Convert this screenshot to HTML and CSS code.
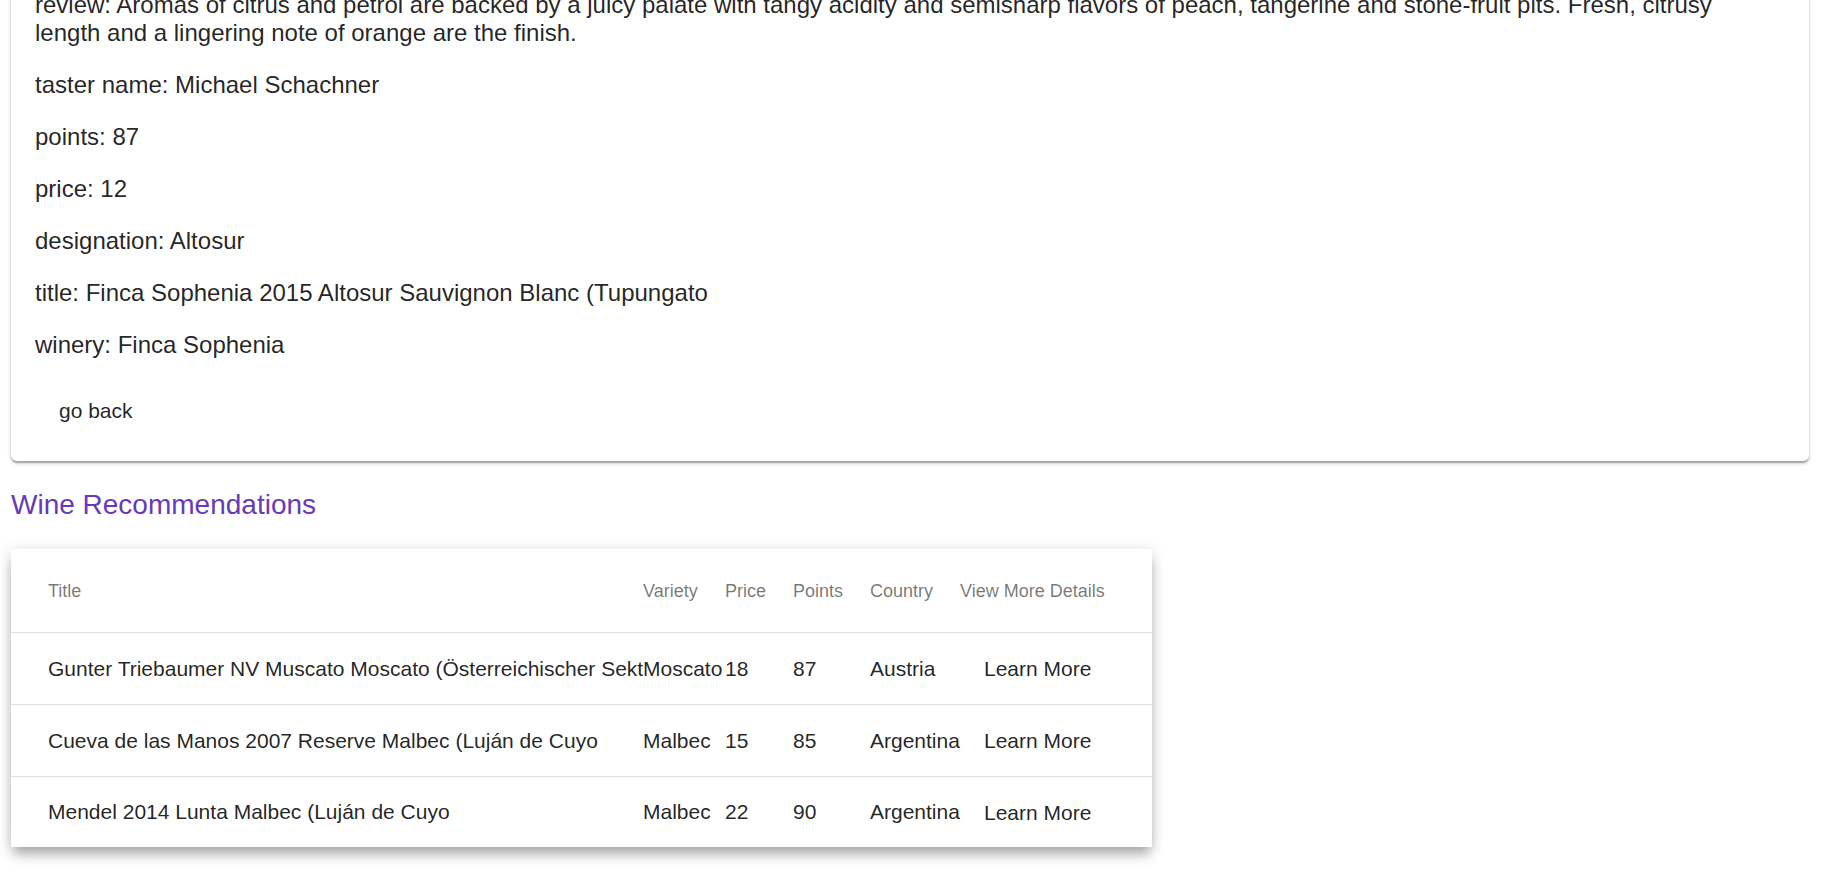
FILE: index.html
```html
<!DOCTYPE html>
<html lang="en">
<head>
<meta charset="utf-8">
<title>Wine Details</title>
<link rel="stylesheet" href="styles.css">
</head>
<body>
<main class="page">
  <section class="detail-card">
    <p class="field review">review: Aromas of citrus and petrol are backed by a juicy palate with tangy acidity and semisharp flavors of peach, tangerine and stone-fruit pits. Fresh, citrusy length and a lingering note of orange are the finish.</p>
    <p class="field">taster name: Michael Schachner</p>
    <p class="field">points: 87</p>
    <p class="field">price: 12</p>
    <p class="field">designation: Altosur</p>
    <p class="field">title: Finca Sophenia 2015 Altosur Sauvignon Blanc (Tupungato</p>
    <p class="field">winery: Finca Sophenia</p>
    <button class="text-btn" type="button">go back</button>
  </section>

  <h2 class="section-title">Wine Recommendations</h2>

  <div class="table-card">
    <table class="rec-table">
      <colgroup>
        <col class="c-title">
        <col class="c-variety">
        <col class="c-price">
        <col class="c-points">
        <col class="c-country">
        <col class="c-details">
      </colgroup>
      <thead>
        <tr>
          <th class="first">Title</th>
          <th>Variety</th>
          <th>Price</th>
          <th>Points</th>
          <th>Country</th>
          <th>View More Details</th>
        </tr>
      </thead>
      <tbody>
        <tr>
          <td class="first">Gunter Triebaumer NV Muscato Moscato (Österreichischer Sekt</td>
          <td>Moscato</td>
          <td>18</td>
          <td>87</td>
          <td>Austria</td>
          <td><button class="text-btn cell-btn" type="button">Learn More</button></td>
        </tr>
        <tr>
          <td class="first">Cueva de las Manos 2007 Reserve Malbec (Luján de Cuyo</td>
          <td>Malbec</td>
          <td>15</td>
          <td>85</td>
          <td>Argentina</td>
          <td><button class="text-btn cell-btn" type="button">Learn More</button></td>
        </tr>
        <tr>
          <td class="first">Mendel 2014 Lunta Malbec (Luján de Cuyo</td>
          <td>Malbec</td>
          <td>22</td>
          <td>90</td>
          <td>Argentina</td>
          <td><button class="text-btn cell-btn" type="button">Learn More</button></td>
        </tr>
      </tbody>
    </table>
  </div>
</main>
</body>
</html>
```

FILE: styles.css
```css
* {
  box-sizing: border-box;
}

html, body {
  margin: 0;
  padding: 0;
  background: #ffffff;
}

body {
  font-family: "Liberation Sans", Arial, Helvetica, sans-serif;
  color: rgba(0, 0, 0, 0.87);
  overflow: hidden;
}

.page {
  padding: 0 18px 40px 11px;
}

.detail-card {
  margin-top: -33px;
  background: #ffffff;
  border-radius: 6px;
  padding: 24px 24px 24px 24px;
  box-shadow:
    0 1.5px 4.5px 0 rgba(0, 0, 0, 0.2),
    0 1.5px 1.5px 0 rgba(0, 0, 0, 0.14),
    0 3px 1.5px -1.5px rgba(0, 0, 0, 0.12);
}

.field {
  margin: 0 0 24px 0;
  font-size: 24px;
  line-height: 28px;
}

.review {
  max-width: 1700px;
}

.text-btn {
  display: inline-flex;
  align-items: center;
  justify-content: center;
  min-height: 54px;
  padding: 12px 24px;
  border: 0;
  border-radius: 3px;
  background: transparent;
  font-family: "Liberation Sans", Arial, Helvetica, sans-serif;
  font-size: 21px;
  line-height: 29px;
  color: rgba(0, 0, 0, 0.87);
  cursor: pointer;
}

.section-title {
  margin: 28px 0 28px 0;
  font-size: 28px;
  line-height: 32px;
  font-weight: 400;
  color: #673ab7;
}

.table-card {
  width: 1141px;
  background: #ffffff;
  box-shadow:
    0 9px 12px -2px rgba(0, 0, 0, 0.32),
    0 0 14px rgba(0, 0, 0, 0.1);
}

.rec-table {
  width: 1141px;
  table-layout: fixed;
  border-collapse: collapse;
}

.c-title { width: 632px; }
.c-variety { width: 82px; }
.c-price { width: 68px; }
.c-points { width: 77px; }
.c-country { width: 90px; }
.c-details { width: 192px; }

.rec-table th,
.rec-table td {
  padding: 0;
  text-align: left;
  vertical-align: middle;
  white-space: nowrap;
  border-bottom: 1px solid #e0e0e0;
}

.rec-table th {
  height: 83px;
  padding-top: 2px;
  font-size: 18px;
  font-weight: 400;
  color: rgba(0, 0, 0, 0.54);
}

.rec-table td {
  height: 72px;
  padding-top: 1px;
  font-size: 21px;
  color: rgba(0, 0, 0, 0.87);
}

.rec-table tbody tr:last-child td {
  border-bottom: 0;
  height: 71px;
}

.rec-table .first {
  padding-left: 37px;
}

.cell-btn {
  vertical-align: middle;
}
```
